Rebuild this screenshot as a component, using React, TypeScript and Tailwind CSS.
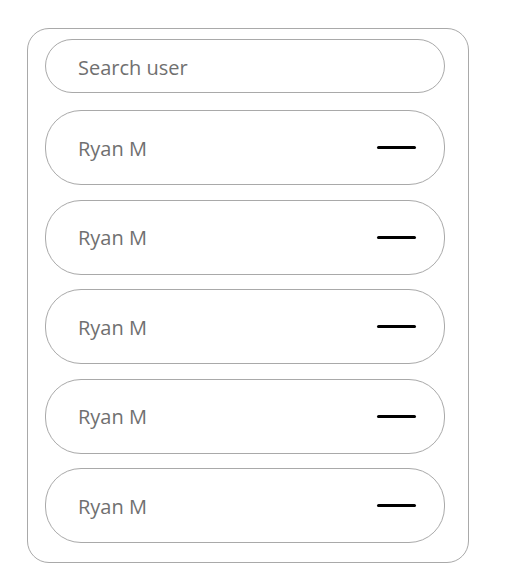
import React from "react";

function Row({ name }: { name: string }) {
  return (
    <div className="flex h-[75px] w-[400px] items-center justify-between rounded-[36px] border border-[#a9a9a9] pl-[32px] pr-[28px]">
      <span className="pt-[2px] text-[20px] text-[#707070]">{name}</span>
      <span className="block h-[3px] w-[39px] rounded-full bg-black" />
    </div>
  );
}

export default function App() {
  return (
    <div
      className="min-h-[579px] w-[505px] bg-white pl-[27px] pt-[28px]"
      style={{ fontFamily: '"Open Sans", "Noto Sans", sans-serif' }}
    >
      <div className="flex w-[442px] flex-col rounded-[22px] border border-[#a9a9a9] pb-[19px] pl-[17px] pt-[10px]">
        <div className="flex h-[54px] w-[400px] items-center rounded-full border border-[#a9a9a9] pl-[32px]">
          <span className="pt-[4px] text-[20px] text-[#707070]">Search user</span>
        </div>
        <div className="mt-[17px] flex flex-col gap-[14.5px]">
          {Array.from({ length: 5 }).map((_, i) => (
            <Row key={i} name="Ryan M" />
          ))}
        </div>
      </div>
    </div>
  );
}
